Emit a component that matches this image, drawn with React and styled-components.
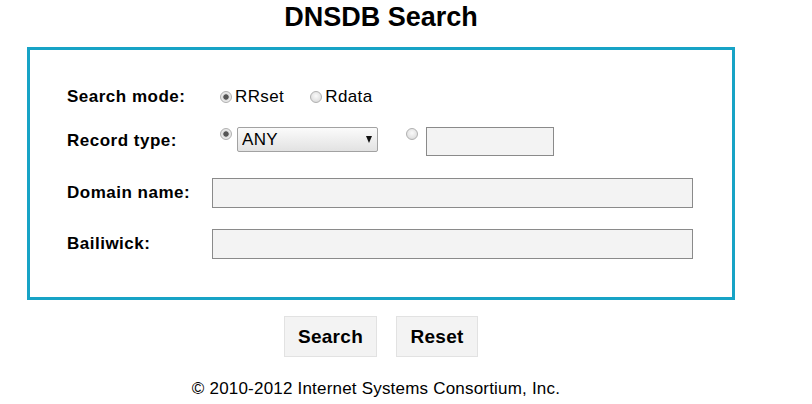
import React from "react";
import styled, { createGlobalStyle } from "styled-components";

const Global = createGlobalStyle`
  html, body { margin: 0; padding: 0; background: #fff; }
  body { font-family: "Liberation Sans", Arial, sans-serif; color: #000; }
`;

const Page = styled.div`
  width: 762px;
  padding-top: 1px;
  display: flex;
  flex-direction: column;
  align-items: center;
`;

const Title = styled.h1`
  margin: 0;
  font-size: 27px;
  line-height: 32px;
  font-weight: bold;
`;

const Box = styled.form`
  box-sizing: border-box;
  width: 708px;
  margin-top: 14px;
  border: 3px solid #17a3c6;
  padding: 37px 39px 38px 37px;
  display: flex;
  flex-direction: column;
`;

const Row = styled.div`
  display: grid;
  grid-template-columns: 145px 1fr;
  align-items: ${(p) => (p.$top ? "start" : "center")};
  height: ${(p) => p.$h}px;
  margin-top: ${(p) => p.$mt || 0}px;
`;

const Label = styled.label`
  font-size: 17px;
  font-weight: bold;
  letter-spacing: 0.5px;
  line-height: ${(p) => p.$lh || 20}px;
  white-space: nowrap;
`;

const Field = styled.div`
  display: flex;
  align-items: ${(p) => (p.$top ? "flex-start" : "center")};
`;

const Radio = styled.input.attrs({ type: "radio" })`
  appearance: none;
  -webkit-appearance: none;
  box-sizing: border-box;
  width: 12px;
  height: 12px;
  margin: ${(p) => p.$mt || 0}px 0 0 ${(p) => p.$ml || 0}px;
  border-radius: 50%;
  border: 1px solid #b0b0b0;
  background: radial-gradient(circle at 50% 40%, #fafafa 0, #e4e4e4 60%, #d0d0d0 100%);
  flex: none;
  &:checked {
    background: radial-gradient(circle at 50% 50%, #555 0, #555 2.3px, #cfcfcf 3px, #ececec 4px, #d8d8d8 100%);
  }
`;

const RadioText = styled.span`
  font-size: 17px;
  letter-spacing: 0.4px;
  margin-left: 3px;
  line-height: 20px;
`;

const SelectWrap = styled.div`
  position: relative;
  margin-left: 5px;
  width: 141px;
  height: 25px;
`;

const Select = styled.select`
  appearance: none;
  -webkit-appearance: none;
  box-sizing: border-box;
  width: 100%;
  height: 100%;
  margin: 0;
  padding: 0 0 0 4px;
  border: 1px solid #a2a2a2;
  border-radius: 2px;
  background: linear-gradient(#fbfbfb, #e2e2e2);
  font-family: "Liberation Sans", Arial, sans-serif;
  font-size: 17px;
  letter-spacing: 0.3px;
  color: #000;
`;

const Arrow = styled.span`
  position: absolute;
  right: 6px;
  top: 9px;
  width: 0;
  height: 0;
  border-left: 3.5px solid transparent;
  border-right: 3.5px solid transparent;
  border-top: 7px solid #111;
  pointer-events: none;
`;

const TextInput = styled.input.attrs({ type: "text" })`
  box-sizing: border-box;
  width: ${(p) => p.$w}px;
  height: ${(p) => p.$h}px;
  margin: 0 0 0 ${(p) => p.$ml || 0}px;
  padding: 0 4px;
  border: 1px solid #8a8a8a;
  background: #f3f3f3;
  font-family: "Liberation Sans", Arial, sans-serif;
  font-size: 16px;
  outline: none;
`;

const Buttons = styled.div`
  display: flex;
  gap: 19px;
  margin-top: 16px;
`;

const Button = styled.button`
  box-sizing: border-box;
  width: ${(p) => p.$w}px;
  height: 41px;
  margin: 0;
  padding: 0;
  border: 1px solid #e2e2e2;
  background: #f3f3f3;
  font-family: "Liberation Sans", Arial, sans-serif;
  font-size: 19px;
  font-weight: bold;
  letter-spacing: 0.3px;
  color: #000;
`;

const Footer = styled.div`
  margin-top: 22px;
  padding-right: 10px;
  font-size: 17px;
  letter-spacing: 0.2px;
  line-height: 20px;
`;

export default function App() {
  return (
    <>
      <Global />
      <Page>
        <Title>DNSDB Search</Title>
        <Box onSubmit={(e) => e.preventDefault()}>
          <Row $h={20}>
            <Label>Search mode:</Label>
            <Field>
              <Radio name="mode" defaultChecked $ml={8} />
              <RadioText>RRset</RadioText>
              <Radio name="mode" $ml={26} />
              <RadioText>Rdata</RadioText>
            </Field>
          </Row>
          <Row $h={29} $mt={20} $top>
            <Label $lh={27}>Record type:</Label>
            <Field $top>
              <Radio name="rtype" defaultChecked $ml={8} $mt={1} />
              <SelectWrap>
                <Select defaultValue="ANY">
                  <option>ANY</option>
                  <option>A</option>
                  <option>AAAA</option>
                  <option>CNAME</option>
                  <option>MX</option>
                  <option>NS</option>
                  <option>PTR</option>
                  <option>SOA</option>
                  <option>TXT</option>
                </Select>
                <Arrow />
              </SelectWrap>
              <Radio name="rtype" $ml={28} $mt={1} />
              <TextInput $w={128} $h={29} $ml={8} />
            </Field>
          </Row>
          <Row $h={30} $mt={22}>
            <Label>Domain name:</Label>
            <TextInput $w={481} $h={30} />
          </Row>
          <Row $h={30} $mt={21}>
            <Label>Bailiwick:</Label>
            <TextInput $w={481} $h={30} />
          </Row>
        </Box>
        <Buttons>
          <Button $w={93}>Search</Button>
          <Button $w={82}>Reset</Button>
        </Buttons>
        <Footer>© 2010-2012 Internet Systems Consortium, Inc.</Footer>
      </Page>
    </>
  );
}
